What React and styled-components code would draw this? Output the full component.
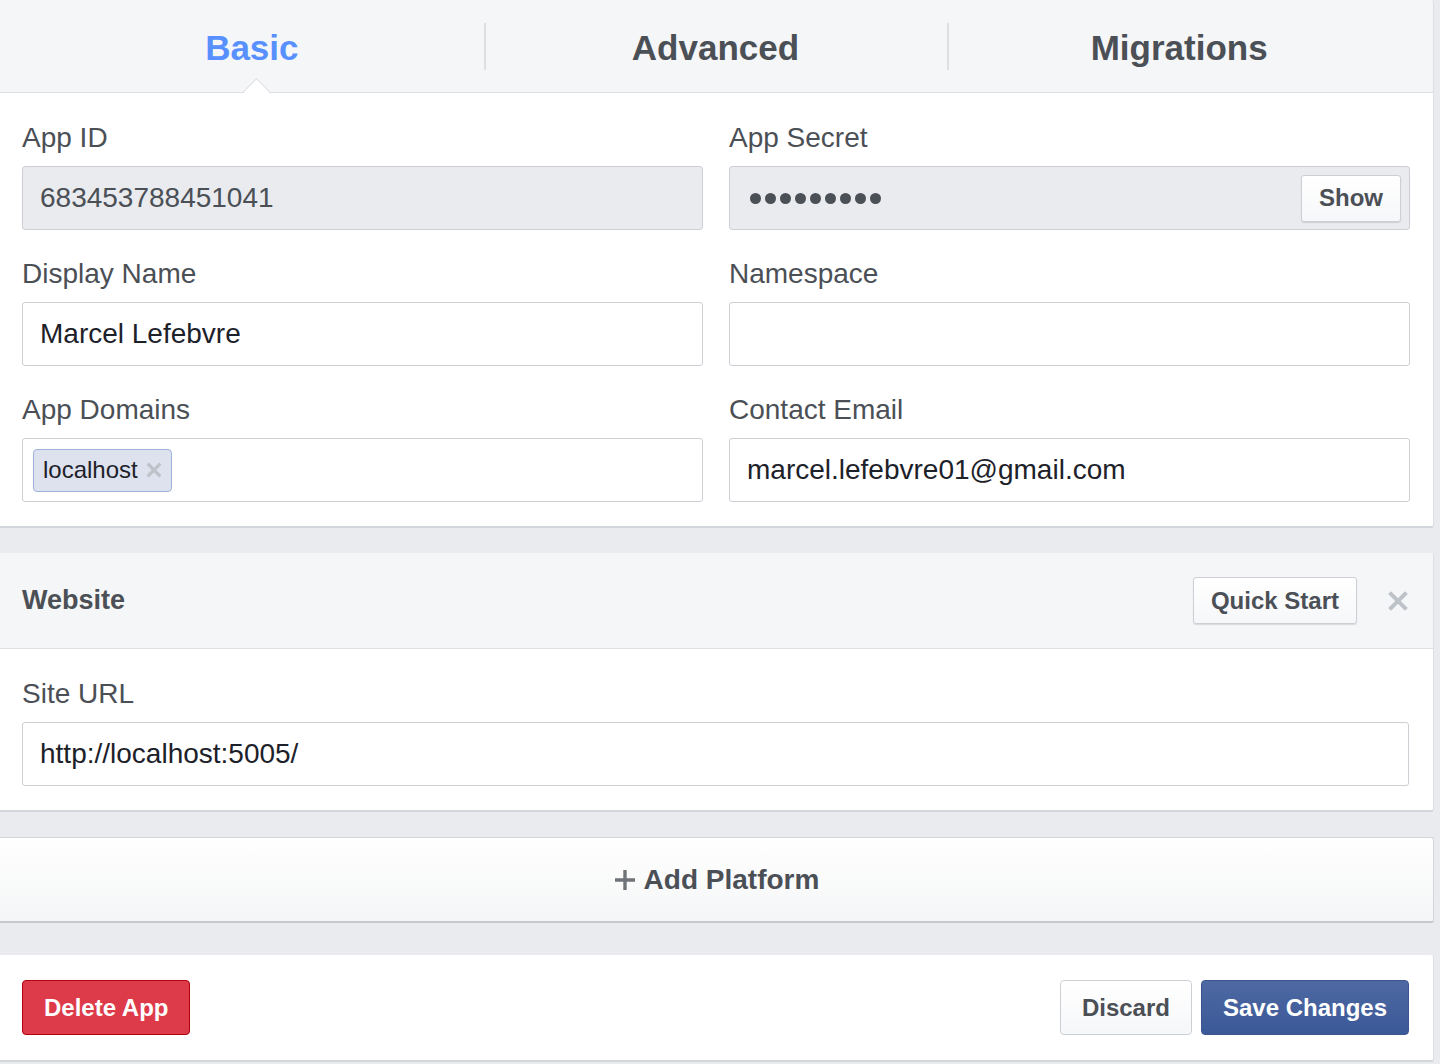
import React from "react";
import styled, { createGlobalStyle } from "styled-components";

const GlobalStyle = createGlobalStyle`
  html, body {
    margin: 0;
    padding: 0;
    background: #e9ebee;
    font-family: "Liberation Sans", Arial, Helvetica, sans-serif;
    -webkit-font-smoothing: antialiased;
  }
`;

const Cross = ({ size, weight }) => (
  <svg width={size} height={size} viewBox="0 0 20 20">
    <path
      d="M3 3 L17 17 M17 3 L3 17"
      stroke="currentColor"
      strokeWidth={weight}
      strokeLinecap="butt"
    />
  </svg>
);

export default function App() {
  return (
    <>
      <GlobalStyle />
      <Page>
        <Tabs>
          <Tab active>Basic</Tab>
          <Tab>Advanced</Tab>
          <Tab>Migrations</Tab>
        </Tabs>

        <Panel flatTop>
          <Body>
            <Grid>
              <Field>
                <Label>App ID</Label>
                <Input readOnly>683453788451041</Input>
              </Field>
              <Field>
                <Label>App Secret</Label>
                <Input readOnly>
                  <Dots>
                    {Array.from({ length: 9 }).map((_, i) => (
                      <Dot key={i} />
                    ))}
                  </Dots>
                  <SmallButton>Show</SmallButton>
                </Input>
              </Field>
              <Field>
                <Label>Display Name</Label>
                <Input>Marcel Lefebvre</Input>
              </Field>
              <Field>
                <Label>Namespace</Label>
                <Input />
              </Field>
              <Field>
                <Label>App Domains</Label>
                <Input tight>
                  <Tag>
                    localhost
                    <TagX>
                      <Cross size={18} weight={3.6} />
                    </TagX>
                  </Tag>
                </Input>
              </Field>
              <Field>
                <Label>Contact Email</Label>
                <Input>marcel.lefebvre01@gmail.com</Input>
              </Field>
            </Grid>
          </Body>
        </Panel>

        <Panel>
          <PanelHeader>
            <HeaderTitle>Website</HeaderTitle>
            <HeaderActions>
              <SmallButton>Quick Start</SmallButton>
              <CloseX>
                <Cross size={24} weight={3.4} />
              </CloseX>
            </HeaderActions>
          </PanelHeader>
          <Body>
            <Field>
              <Label>Site URL</Label>
              <Input>http://localhost:5005/</Input>
            </Field>
          </Body>
        </Panel>

        <AddPlatform>
          <Plus>
            <svg width="22" height="22" viewBox="0 0 22 22">
              <path d="M11 1 V21 M1 11 H21" stroke="currentColor" strokeWidth="3.4" />
            </svg>
          </Plus>
          Add Platform
        </AddPlatform>

        <Footer>
          <Button variant="danger">Delete App</Button>
          <FooterRight>
            <Button>Discard</Button>
            <Button variant="primary">Save Changes</Button>
          </FooterRight>
        </Footer>
      </Page>
    </>
  );
}

const Page = styled.div`
  width: 1434px;
  display: flex;
  flex-direction: column;
  color: #4b4f56;
`;

const Tabs = styled.div`
  height: 92px;
  background: #f5f6f7;
  border-bottom: 1px solid #dddfe2;
  border-right: 1px solid #dddfe2;
  border-top-right-radius: 3px;
  padding: 0 22px 0 20px;
  display: grid;
  grid-template-columns: repeat(3, 1fr);
  align-items: center;
`;

const Tab = styled.div`
  position: relative;
  height: 100%;
  display: flex;
  align-items: center;
  justify-content: center;
  padding-top: 4px;
  box-sizing: border-box;
  font-size: 35px;
  font-weight: bold;
  color: ${(p) => (p.active ? "#5890ff" : "#4b4f56")};

  &:not(:first-child)::before {
    content: "";
    position: absolute;
    left: 0;
    top: 23px;
    height: 47px;
    border-left: 2px solid #dddfe2;
  }

  ${(p) =>
    p.active &&
    `
    &::after {
      content: "";
      position: absolute;
      left: 227px;
      bottom: -9px;
      width: 18px;
      height: 18px;
      background: #fff;
      border-left: 1px solid #dddfe2;
      border-top: 1px solid #dddfe2;
      transform: rotate(45deg);
    }
  `}
`;

const Panel = styled.div`
  background: #fff;
  border-right: 1px solid #dddfe2;
  border-bottom: 2px solid #d3d6db;
  border-radius: ${(p) => (p.flatTop ? "0 0 3px 0" : "0 3px 3px 0")};
  margin-bottom: 25px;
`;

const Body = styled.div`
  padding: 28px 24px 24px 22px;
`;

const Grid = styled.div`
  display: grid;
  grid-template-columns: 681px 681px;
  column-gap: 26px;
  row-gap: 27px;
`;

const Field = styled.div`
  display: flex;
  flex-direction: column;
`;

const Label = styled.div`
  font-size: 28px;
  line-height: 34px;
  color: #4b4f56;
  margin-bottom: 11px;
`;

const Input = styled.div`
  box-sizing: border-box;
  height: 64px;
  border: 1px solid #ccd0d5;
  border-radius: 3px;
  background: ${(p) => (p.readOnly ? "#e9ebee" : "#fff")};
  color: ${(p) => (p.readOnly ? "#4b4f56" : "#1d2129")};
  font-size: 28px;
  padding: ${(p) => (p.tight ? "0 10px" : "0 8px 0 17px")};
  display: flex;
  align-items: center;
  justify-content: space-between;
`;

const Dots = styled.div`
  display: flex;
  gap: 4px;
  padding-left: 3px;
`;

const Dot = styled.span`
  width: 11px;
  height: 11px;
  border-radius: 50%;
  background: #4b4f56;
`;

const SmallButton = styled.button`
  box-sizing: border-box;
  height: 47px;
  padding: 0 17px;
  border: 1px solid #ccd0d5;
  border-radius: 3px;
  background: linear-gradient(#fff, #f6f7f9);
  box-shadow: 0 1px 1px rgba(0, 0, 0, 0.12);
  font-family: inherit;
  font-size: 24px;
  font-weight: bold;
  color: #4b4f56;
`;

const Tag = styled.div`
  display: flex;
  align-items: center;
  gap: 7px;
  height: 43px;
  box-sizing: border-box;
  padding: 0 8px 0 9px;
  background: #dde2ee;
  border: 1px solid #9cb4d8;
  border-radius: 4px;
  font-size: 24px;
  color: #1d2129;
`;

const TagX = styled.span`
  display: flex;
  color: #bec2c9;
`;

const PanelHeader = styled.div`
  height: 95px;
  background: #f5f6f7;
  border-bottom: 1px solid #dddfe2;
  border-top-right-radius: 3px;
  padding: 0 24px 0 22px;
  display: flex;
  align-items: center;
  justify-content: space-between;
`;

const HeaderTitle = styled.div`
  font-size: 27px;
  font-weight: bold;
  color: #4b4f56;
`;

const HeaderActions = styled.div`
  display: flex;
  align-items: center;
  gap: 29px;
`;

const CloseX = styled.span`
  display: flex;
  color: #bec2c9;
  margin-right: -1px;
`;

const AddPlatform = styled.div`
  box-sizing: border-box;
  height: 86px;
  margin-bottom: 32px;
  background: linear-gradient(#fff, #f5f6f7);
  border-top: 1px solid #d3d6db;
  border-right: 1px solid #d3d6db;
  border-bottom: 2px solid #c4c7cc;
  border-radius: 0 3px 3px 0;
  display: flex;
  align-items: center;
  justify-content: center;
  gap: 8px;
  font-size: 28px;
  font-weight: bold;
  color: #4b4f56;
`;

const Plus = styled.span`
  display: flex;
  color: #6f737a;
`;

const Footer = styled.div`
  box-sizing: border-box;
  height: 107px;
  background: #fff;
  border-right: 1px solid #dddfe2;
  border-bottom: 2px solid #d3d6db;
  border-radius: 0 3px 3px 0;
  padding: 0 24px 0 22px;
  display: flex;
  align-items: center;
  justify-content: space-between;
`;

const FooterRight = styled.div`
  display: flex;
  gap: 9px;
`;

const Button = styled.button`
  box-sizing: border-box;
  height: 55px;
  padding: 0 21px;
  border-radius: 4px;
  font-family: inherit;
  font-size: 24px;
  font-weight: bold;
  ${(p) =>
    p.variant === "danger"
      ? `
    background: #dd3a4a;
    border: 1px solid #b0000e;
    color: #fff;
  `
      : p.variant === "primary"
      ? `
    background: linear-gradient(#4e69a2, #3b5998);
    border: 1px solid #3b5591;
    color: #fff;
  `
      : `
    background: linear-gradient(#fff, #f6f7f9);
    border: 1px solid #ccd0d5;
    color: #4b4f56;
  `}
`;
